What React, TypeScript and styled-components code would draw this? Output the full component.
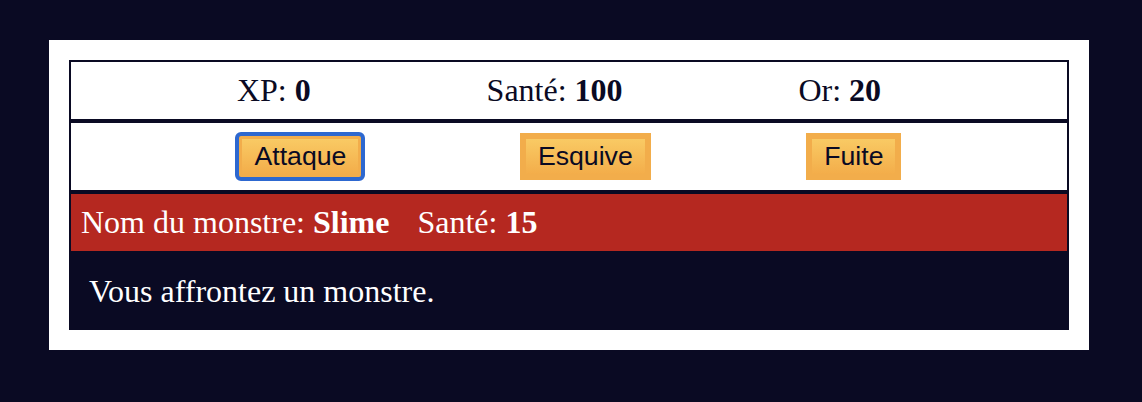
import React from 'react'
import styled, { createGlobalStyle } from 'styled-components'

const GlobalStyle = createGlobalStyle`
  html,
  body {
    margin: 0;
    padding: 0;
    min-height: 100%;
    background-color: #0a0a23;
    font-family: 'Liberation Serif', 'Times New Roman', serif;
  }
`

const Game = styled.div`
  width: 1000px;
  margin: 40px 0 0 49px;
  padding: 20px;
  background-color: #ffffff;
  color: #ffffff;
  font-size: 32px;
`

const Bar = styled.div`
  display: flex;
  justify-content: space-evenly;
  align-items: center;
  border: 2px solid #0a0a23;
  padding: 10px;
  color: #0a0a23;
`

const Stat = styled.span`
  padding-right: 20px;
`

const MonsterStats = styled.div`
  border: 2px solid #0a0a23;
  padding: 10px;
  background-color: #b52820;
  color: #ffffff;
`

const Text = styled.div`
  background-color: #0a0a23;
  color: #ffffff;
  padding: 20px;
`

const Button = styled.button<{ $focused?: boolean }>`
  font-family: 'Liberation Sans', Arial, sans-serif;
  font-size: 26.67px;
  line-height: normal;
  padding: 2px 12px;
  cursor: pointer;
  color: #0a0a23;
  background-color: #f2ad4b;
  background-image: linear-gradient(#f9ca64, #f3ad4a);
  border: 6px solid #f2ad4b;
  border-radius: ${(p) => (p.$focused ? '5px' : '0')};
  outline: ${(p) => (p.$focused ? '4px solid #2d68d0' : 'none')};
  outline-offset: -3px;
`

const stats = [
  { label: 'XP', value: 0 },
  { label: 'Santé', value: 100 },
  { label: 'Or', value: 20 },
]

const actions = ['Attaque', 'Esquive', 'Fuite']

export default function App() {
  return (
    <>
      <GlobalStyle />
      <Game>
        <Bar>
          {stats.map((s) => (
            <Stat key={s.label}>
              {s.label}: <strong>{s.value}</strong>
            </Stat>
          ))}
        </Bar>
        <Bar>
          {actions.map((a, i) => (
            <Button key={a} $focused={i === 0}>
              {a}
            </Button>
          ))}
        </Bar>
        <MonsterStats>
          <Stat>
            Nom du monstre: <strong>Slime</strong>
          </Stat>{' '}
          <Stat>
            Santé: <strong>15</strong>
          </Stat>
        </MonsterStats>
        <Text>Vous affrontez un monstre.</Text>
      </Game>
    </>
  )
}
